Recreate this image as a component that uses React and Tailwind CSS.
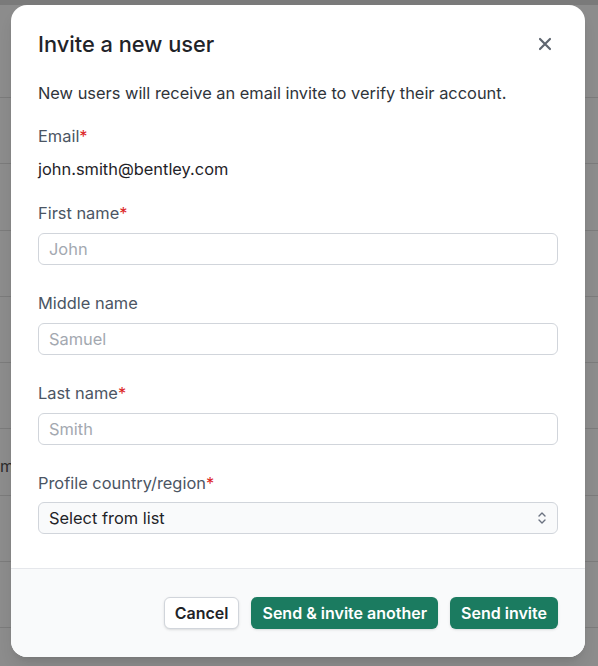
import React from 'react';

const rowLines = [97, 163, 230, 296, 362, 428, 495, 561, 627];

function Label({ children, required }) {
    return (
        <div className="text-[16.4px] leading-6 text-[#4b5563]">
            {children}
            {required && <span className="text-[#dc2626]">*</span>}
        </div>
    );
}

function TextInput({ placeholder }) {
    return (
        <input
            type="text"
            placeholder={placeholder}
            className="mt-2 h-8 w-full rounded-md border border-[#d1d5db] bg-white px-[10px] text-[16.4px] text-[#111827] placeholder:text-[#a3a8b0] outline-none"
        />
    );
}

export default function App() {
    return (
        <div
            className="relative h-[666px] w-[598px] overflow-hidden bg-[#8c8c8c]"
            style={{ fontFamily: 'Inter, "Noto Sans", sans-serif' }}
        >
            {/* page behind the overlay */}
            <div className="absolute inset-x-0 top-0 h-[5px] bg-[#7a7a7a]" />
            {rowLines.map((y) => (
                <div key={y} className="absolute inset-x-0 h-px bg-[#7b7b7b]" style={{ top: y }} />
            ))}
            <div className="absolute left-0 top-[454px] text-[16px] text-[#2a2a2a]">m</div>

            {/* modal */}
            <div className="absolute left-[11px] top-[5px] flex h-[652px] w-[574px] flex-col overflow-hidden rounded-2xl bg-white shadow-lg">
                <div className="flex-1 px-[27px] pt-[25px]">
                    <div className="flex items-center justify-between">
                        <h2 className="text-[21.8px] font-medium leading-7 text-[#1f2328]">Invite a new user</h2>
                        <button className="mr-[1px] flex h-6 w-6 items-center justify-center text-[#5f6670]">
                            <svg width="14" height="14" viewBox="0 0 14 14" fill="none" stroke="currentColor" strokeWidth="2.2" strokeLinecap="round">
                                <path d="M2 2L12 12M12 2L2 12" />
                            </svg>
                        </button>
                    </div>

                    <p className="mt-[23px] text-[16.4px] leading-6 text-[#2f343a]">
                        New users will receive an email invite to verify their account.
                    </p>

                    <div className="mt-[19px]">
                        <Label required>Email</Label>
                        <div className="mt-[9px] text-[16.4px] leading-6 text-[#1f2328]">john.smith@bentley.com</div>
                    </div>

                    <div className="mt-[20px]">
                        <Label required>First name</Label>
                        <TextInput placeholder="John" />
                    </div>

                    <div className="mt-[26px]">
                        <Label>Middle name</Label>
                        <TextInput placeholder="Samuel" />
                    </div>

                    <div className="mt-[26px]">
                        <Label required>Last name</Label>
                        <TextInput placeholder="Smith" />
                    </div>

                    <div className="mt-[26px]">
                        <Label required>Profile country/region</Label>
                        <div className="mt-[7px] flex h-8 w-full items-center justify-between rounded-md border border-[#d1d5db] bg-[#f9fafb] pl-[10px] pr-[10px]">
                            <span className="text-[16.4px] text-[#1f2328]">Select from list</span>
                            <svg width="10" height="16" viewBox="0 0 10 16" fill="none" stroke="#6b7280" strokeWidth="1.4" strokeLinecap="round" strokeLinejoin="round">
                                <path d="M2 6L5 3L8 6M2 10L5 13L8 10" />
                            </svg>
                        </div>
                    </div>
                </div>

                <div className="flex h-[89px] items-center justify-end gap-3 border-t border-[#e5e7eb] bg-[#f9fafb] px-[27px]">
                    <button className="h-8 rounded-md border border-[#d1d5db] bg-white px-[10px] text-[16px] font-semibold text-[#1f2328] shadow-sm">
                        Cancel
                    </button>
                    <button className="h-8 rounded-md bg-[#1b7b60] px-[11px] text-[16px] font-semibold text-white shadow-sm">
                        Send &amp; invite another
                    </button>
                    <button className="h-8 rounded-md bg-[#1b7b60] px-[11px] text-[16px] font-semibold text-white shadow-sm">
                        Send invite
                    </button>
                </div>
            </div>
        </div>
    );
}
